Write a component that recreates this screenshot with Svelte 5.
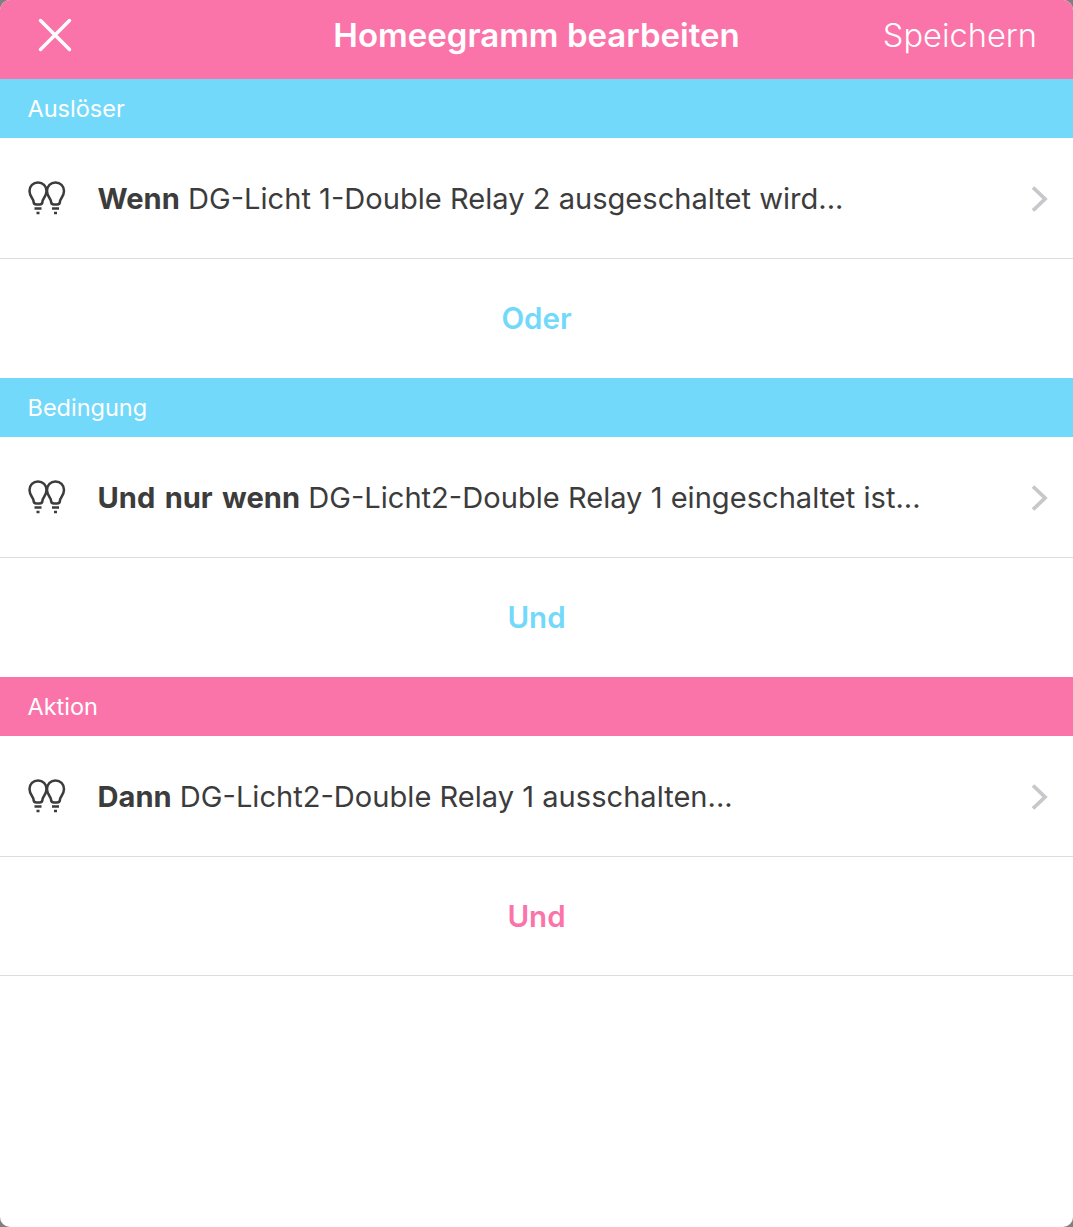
<script>
    const sections = [
        { title: 'Auslöser', tone: 'blue', lead: 'Wenn', text: 'DG-Licht 1-Double Relay 2 ausgeschaltet wird...', add: 'Oder' },
        { title: 'Bedingung', tone: 'blue', lead: 'Und nur wenn', text: 'DG-Licht2-Double Relay 1 eingeschaltet ist...', add: 'Und' },
        { title: 'Aktion', tone: 'pink', lead: 'Dann', text: 'DG-Licht2-Double Relay 1 ausschalten...', add: 'Und' }
    ];
</script>

<main class="screen">
    <header class="topbar">
        <button class="close" aria-label="Schließen">
            <svg width="36" height="36" viewBox="0 0 36 36">
                <path d="M3.500 3.500 L32.500 32.500 M32.500 3.500 L3.500 32.500" stroke="#fff" stroke-width="3.400" stroke-linecap="round" fill="none" />
            </svg>
        </button>
        <h1>Homeegramm bearbeiten</h1>
        <span class="save">Speichern</span>
    </header>

    {#each sections as section}
        <section>
            <div class="section-title {section.tone}">{section.title}</div>
            <div class="row">
                <svg class="bulbs" width="38" height="34" viewBox="0 0 38 34" fill="none" stroke="#3c3c3c" stroke-width="2.500">
                    <path d="M5.500 20.500 C5.500 18 1.500 15.500 1.500 9.900 C1.500 5 5.200 1.500 10 1.500 C14.800 1.500 18.500 5 18.500 9.900 C18.500 15.500 14.500 18 14.500 20.500 Q14.500 23.500 11.500 23.500 H8.500 Q5.500 23.500 5.500 20.500 Z" stroke-linejoin="round" />
                    <path d="M23 20.500 C23 18 19 15.500 19 9.900 C19 5 22.700 1.500 27.500 1.500 C32.300 1.500 36 5 36 9.900 C36 15.500 32 18 32 20.500 Q32 23.500 29 23.500 H26 Q23 23.500 23 20.500 Z" stroke-linejoin="round" />
                    <path d="M6.500 27.500 H13.500 M8.500 32 H11.500 M24 27.500 H31 M26 32 H29" />
                </svg>
                <p><strong>{section.lead}</strong> {section.text}</p>
                <svg class="chevron" width="18" height="28" viewBox="0 0 18 28" fill="none">
                    <path d="M3 2.500 L15 14 L3 25.500" stroke="#c7c7cc" stroke-width="3.800" />
                </svg>
            </div>
            <div class="add {section.tone}">{section.add}</div>
        </section>
    {/each}
</main>

<style>
    :global(body) {
        background: #808080;
    }
    .screen {
        height: 1227px;
        background: #fff;
        border-radius: 10px;
        overflow: hidden;
        font-family: Inter, Roboto, "Liberation Sans", sans-serif;
    }
    .topbar {
        box-sizing: border-box;
        height: 79px;
        background: #fa74aa;
        color: #fff;
        display: grid;
        grid-template-columns: 1fr auto 1fr;
        align-items: center;
        padding: 0 37px 9px;
    }
    .close {
        background: none;
        border: 0;
        padding: 0;
        display: flex;
        justify-self: start;
    }
    h1 {
        margin: 0;
        font-size: 33px;
        font-weight: 600;
    }
    .save {
        justify-self: end;
        font-size: 32.600px;
        font-weight: 300;
        margin-right: -1px;
    }
    .section-title {
        height: 59px;
        line-height: 60px;
        padding-left: 27.500px;
        color: #fff;
        font-size: 23.500px;
    }
    .section-title.blue {
        background: #72d9fb;
    }
    .section-title.pink {
        background: #fa74aa;
    }
    .row {
        height: 120px;
        display: flex;
        align-items: center;
        padding: 0 25px 0 28px;
        border-bottom: 1px solid #dcdcdc;
    }
    .bulbs {
        flex: none;
    }
    .row p {
        flex: 1;
        margin: 0 0 0 31.500px;
        font-size: 29.100px;
        color: #3c3c3c;
    }
    .row strong {
        word-spacing: 2.500px;
    }
    .chevron {
        flex: none;
        margin-top: 2px;
    }
    .add {
        height: 119px;
        line-height: 119px;
        text-align: center;
        font-size: 29.500px;
        font-weight: 600;
    }
    .add.blue {
        color: #72d9fb;
    }
    .add.pink {
        color: #fa74aa;
    }
    section:last-child .add {
        border-bottom: 1px solid #dcdcdc;
        height: 118px;
    }
</style>
